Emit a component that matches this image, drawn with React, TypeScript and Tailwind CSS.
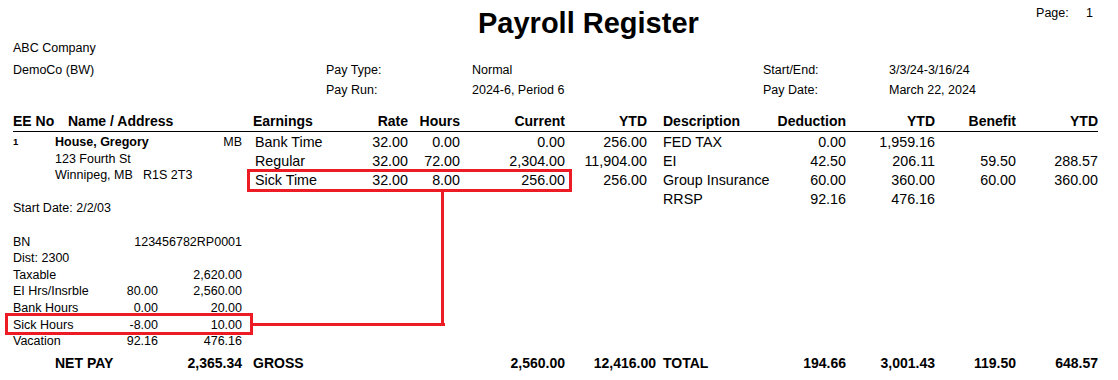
const earnings = [
  ["Bank Time", "32.00", "0.00", "0.00", "256.00"],
  ["Regular", "32.00", "72.00", "2,304.00", "11,904.00"],
  ["Sick Time", "32.00", "8.00", "256.00", "256.00"],
];

const deductions = [
  ["FED TAX", "0.00", "1,959.16", "", ""],
  ["EI", "42.50", "206.11", "59.50", "288.57"],
  ["Group Insurance", "60.00", "360.00", "60.00", "360.00"],
  ["RRSP", "92.16", "476.16", "", ""],
];

const stats = [
  ["Taxable", "", "2,620.00"],
  ["EI Hrs/Insrble", "80.00", "2,560.00"],
  ["Bank Hours", "0.00", "20.00"],
  ["Sick Hours", "-8.00", "10.00"],
  ["Vacation", "92.16", "476.16"],
];

const fullCols =
  "grid grid-cols-[240px_107px_48px_52px_105px_82px_130px_69px_89px_81px_82px]";

export default function App() {
  return (
    <div className="relative h-[380px] w-[1118px] overflow-hidden bg-white font-['Liberation_Sans',Arial,sans-serif] text-black">
      {/* Title */}
      <div className="flex h-[38px] items-start">
        <h1 className="ml-[478px] mt-[6px] whitespace-nowrap text-[29px] font-bold leading-[34px]">
          Payroll Register
        </h1>
        <div className="ml-auto mr-[25px] mt-[5px] flex text-[12.5px] leading-[16px]">
          <span className="w-[50px]">Page:</span>
          <span>1</span>
        </div>
      </div>

      {/* Company / run info */}
      <div className="ml-[13px] text-[12.5px]">
        <div className="h-[20px] leading-[20px]">ABC Company</div>
        <div className="mt-[2px] grid h-[20px] grid-cols-[313px_146px_291px_126px_1fr] leading-[20px]">
          <span>DemoCo (BW)</span>
          <span>Pay Type:</span>
          <span>Normal</span>
          <span>Start/End:</span>
          <span>3/3/24-3/16/24</span>
        </div>
        <div className="grid h-[20px] grid-cols-[313px_146px_291px_126px_1fr] leading-[20px]">
          <span />
          <span>Pay Run:</span>
          <span>2024-6, Period 6</span>
          <span>Pay Date:</span>
          <span>March 22, 2024</span>
        </div>
      </div>

      <div className="ml-[13px] mt-[11px] w-[1085px]">
        {/* Column headings */}
        <div className={`${fullCols} h-[21px] border-b border-black text-[14px] font-bold leading-[20px] whitespace-nowrap`}>
          <div className="flex">
            <span className="w-[55px]">EE No</span>
            <span>Name / Address</span>
          </div>
          <span>Earnings</span>
          <span className="text-right">Rate</span>
          <span className="text-right">Hours</span>
          <span className="text-right">Current</span>
          <span className="text-right">YTD</span>
          <span className="pl-[16px]">Description</span>
          <span className="text-right">Deduction</span>
          <span className="text-right">YTD</span>
          <span className="text-right">Benefit</span>
          <span className="text-right">YTD</span>
        </div>

        {/* Employee body */}
        <div className="flex">
          <div className="w-[240px] pt-[2px] text-[12.5px] leading-[16.6px] whitespace-nowrap">
            <div className="flex h-[16.6px] w-[229px]">
              <span className="mt-[3px] w-[42px] text-[9.5px] font-bold leading-none">1</span>
              <span className="font-bold">House, Gregory</span>
              <span className="ml-auto">MB</span>
            </div>
            <div className="h-[16.6px] pl-[42px]">123 Fourth St</div>
            <div className="flex h-[16.6px] pl-[42px]">
              <span className="w-[88px]">Winnipeg, MB</span>
              <span>R1S 2T3</span>
            </div>
            <div className="h-[16.6px]" />
            <div className="h-[16.6px]">Start Date: 2/2/03</div>
            <div className="h-[16.6px]" />
            <div className="grid h-[16.6px] w-[229px] grid-cols-[100px_129px]">
              <span>BN</span>
              <span className="text-right">123456782RP0001</span>
            </div>
            <div className="h-[16.6px]">Dist: 2300</div>
            {stats.map(([label, cur, ytd]) => (
              <div key={label} className="grid h-[16.6px] w-[229px] grid-cols-[100px_45px_84px]">
                <span>{label}</span>
                <span className="text-right">{cur}</span>
                <span className="text-right">{ytd}</span>
              </div>
            ))}
          </div>

          <div className="grid grid-cols-[107px_48px_52px_105px_82px_130px_69px_89px_81px_82px] auto-rows-[19px] pt-[1px] text-[14.3px] leading-[19px] whitespace-nowrap">
            {deductions.map((ded, i) => {
              const earn = earnings[i] ?? ["", "", "", "", ""];
              return [
                <span key={`e${i}`} className="pl-[2px]">{earn[0]}</span>,
                <span key={`r${i}`} className="text-right">{earn[1]}</span>,
                <span key={`h${i}`} className="text-right">{earn[2]}</span>,
                <span key={`c${i}`} className="text-right">{earn[3]}</span>,
                <span key={`y${i}`} className="text-right">{earn[4]}</span>,
                <span key={`d${i}`} className="pl-[16px]">{ded[0]}</span>,
                <span key={`a${i}`} className="text-right">{ded[1]}</span>,
                <span key={`t${i}`} className="text-right">{ded[2]}</span>,
                <span key={`b${i}`} className="text-right">{ded[3]}</span>,
                <span key={`z${i}`} className="text-right">{ded[4]}</span>,
              ];
            })}
          </div>
        </div>

        {/* Totals */}
        <div className={`${fullCols} mt-[4px] h-[18px] text-[14px] font-bold leading-[18px] whitespace-nowrap`}>
          <div className="flex w-[229px] pl-[42px]">
            <span>NET PAY</span>
            <span className="ml-auto">2,365.34</span>
          </div>
          <span>GROSS</span>
          <span />
          <span />
          <span className="text-right">2,560.00</span>
          <span className="-mr-[9px] text-right">12,416.00</span>
          <span className="pl-[16px]">TOTAL</span>
          <span className="text-right">194.66</span>
          <span className="text-right">3,001.43</span>
          <span className="text-right">119.50</span>
          <span className="text-right">648.57</span>
        </div>
      </div>

      {/* Red annotation overlay */}
      <div className="pointer-events-none absolute left-[247px] top-[169px] h-[23px] w-[325px] border-[3px] border-[#ed1c24]" />
      <div className="pointer-events-none absolute left-[5px] top-[313px] h-[22px] w-[248px] border-[3px] border-[#ed1c24]" />
      <div className="pointer-events-none absolute left-[253px] top-[323px] h-[3px] w-[192px] bg-[#ed1c24]" />
      <div className="pointer-events-none absolute left-[441px] top-[192px] h-[134px] w-[3px] bg-[#ed1c24]" />
    </div>
  );
}
